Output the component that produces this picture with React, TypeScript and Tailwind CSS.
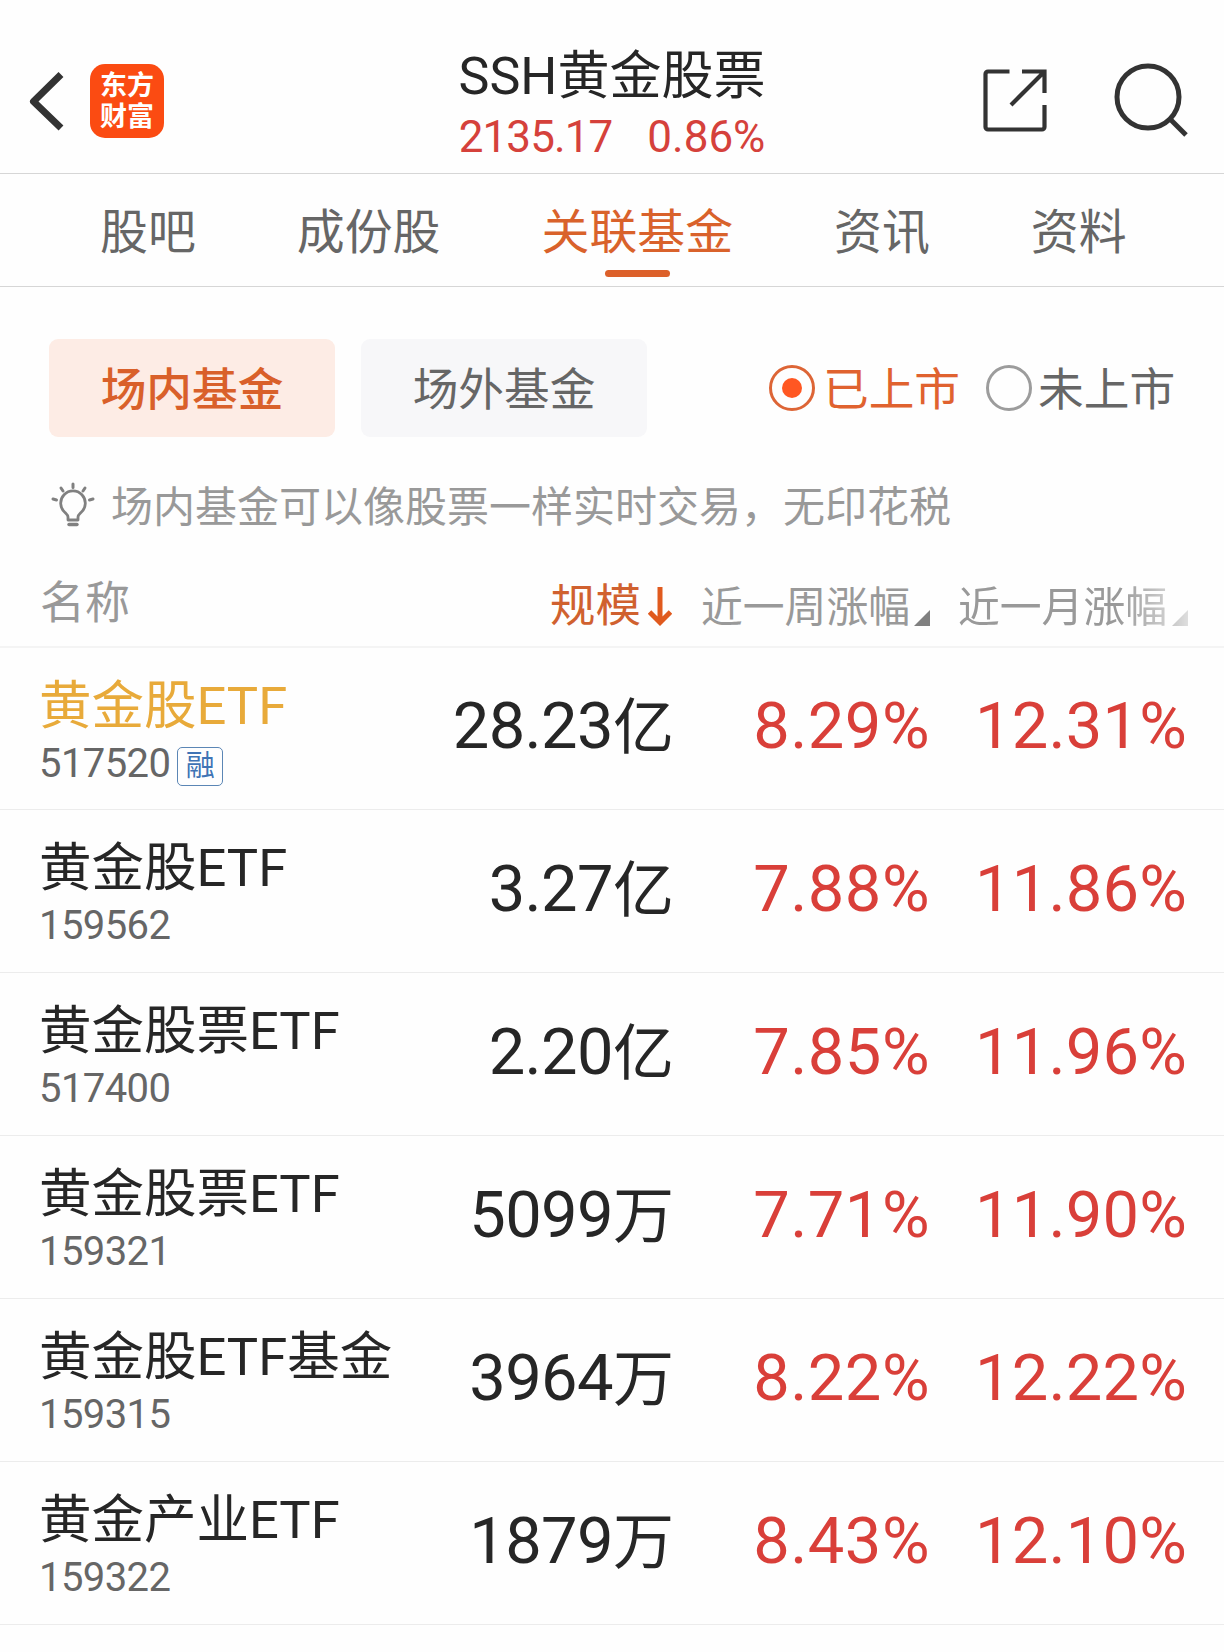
import React from 'react';

const tabs = ["股吧", "成份股", "关联基金", "资讯", "资料"];
const activeTab = "关联基金";

const funds = [
  { name: "黄金股ETF", code: "517520", size: "28.23", unit: "亿", week: "8.29%", month: "12.31%", margin: true, held: true },
  { name: "黄金股ETF", code: "159562", size: "3.27", unit: "亿", week: "7.88%", month: "11.86%" },
  { name: "黄金股票ETF", code: "517400", size: "2.20", unit: "亿", week: "7.85%", month: "11.96%" },
  { name: "黄金股票ETF", code: "159321", size: "5099", unit: "万", week: "7.71%", month: "11.90%" },
  { name: "黄金股ETF基金", code: "159315", size: "3964", unit: "万", week: "8.22%", month: "12.22%" },
  { name: "黄金产业ETF", code: "159322", size: "1879", unit: "万", week: "8.43%", month: "12.10%" },
];

const BackIcon = () => (
  <svg width="36" height="60" viewBox="0 0 36 60" fill="none" stroke="#333" strokeWidth="7" className="shrink-0">
    <path d="M32 3.500L4.500 30.500l27.500 26.500" strokeLinejoin="round" />
  </svg>
);

const ShareIcon = () => (
  <svg width="64" height="64" viewBox="0 0 64 64" fill="none" stroke="#333" strokeWidth="4.200" className="shrink-0">
    <path d="M26.500 3.500H5a2.500 2.500 0 0 0-2.500 2.500v53A2.500 2.500 0 0 0 5 61.500h54a2.500 2.500 0 0 0 2.500-2.500V37" />
    <path d="M39 3.500h22.500V25M61 4L28 37" />
  </svg>
);

const SearchIcon = () => (
  <svg width="76" height="76" viewBox="0 0 76 76" fill="none" stroke="#333" className="shrink-0">
    <circle cx="35" cy="34" r="31" strokeWidth="5" />
    <path d="M56.500 55.500L73 72" strokeWidth="5" />
  </svg>
);

const BulbIcon = () => (
  <svg width="44" height="46" viewBox="0 0 44 46" fill="none" stroke="#808080" strokeWidth="2.800" className="shrink-0 mt-[2px]">
    <path d="M17 38v-3c0-2-1.500-3-3-4.500a12.300 12.300 0 1 1 16 0c-1.500 1.500-3 2.500-3 4.500v3z" strokeLinejoin="round" />
    <path d="M18 42.500h8" strokeWidth="3.400" strokeLinecap="round" />
    <path d="M22 2v3.500M10 6l2 3M34 6l-2 3M2 17l3.500 1M42 17l-3.500 1" strokeWidth="3" strokeLinecap="round" />
  </svg>
);

const DownArrow = () => (
  <svg width="24" height="40" viewBox="0 0 24 40" fill="none" stroke="#e05a1e" strokeWidth="5" className="shrink-0">
    <path d="M12 0v35M1.500 25L12 35.500 22.500 25" />
  </svg>
);

const SortCorner = ({ className }: { className?: string }) => (
  <svg width="16" height="16" viewBox="0 0 16 16" className={className}>
    <path d="M16 0v16H0z" fill="#808080" />
  </svg>
);

const Header = () => (
  <header className="h-[174px] border-b border-[#d6d6d6] relative flex items-start">
    <div className="flex items-center pl-[29px] pt-[64px] gap-[25px]">
      <BackIcon />
      <div className="w-[74px] h-[74px] pt-[2px] rounded-[15px] bg-[#fb4b12] text-white font-bold text-[27px] leading-[31px] flex flex-col items-center justify-center">
        <span>东方</span>
        <span>财富</span>
      </div>
    </div>
    <div className="absolute left-0 right-0 top-[45px] flex flex-col items-center pointer-events-none">
      <h1 className="text-[52px] leading-[64px] text-[#262626]">SSH黄金股票</h1>
      <p className="text-[44px] leading-[56px] text-[#d5413b] flex gap-[35px]">
        <span className="tracking-[-0.900px]">2135.17</span>
        <span>0.86%</span>
      </p>
    </div>
    <div className="ml-auto flex items-start gap-[66px] pr-[35px] pt-[63px]">
      <div className="pt-[5px]">
        <ShareIcon />
      </div>
      <SearchIcon />
    </div>
  </header>
);

const Tabs = () => (
  <nav className="h-[113px] border-b border-[#d6d6d6] flex gap-[101px] pl-[100px] text-[47.900px] leading-[64px] text-[#666] whitespace-nowrap">
    {tabs.map((tab) => (
      <div key={tab} className={`pt-[27px] flex flex-col items-center ${tab === activeTab ? 'text-[#d9622b]' : ''}`}>
        {tab}
        {tab === activeTab && <span className="mt-[5px] w-[65px] h-[7px] rounded-full bg-[#dc602a]" />}
      </div>
    ))}
  </nav>
);

const Filters = () => (
  <div className="flex items-center mt-[52px] pl-[49px] h-[98px] text-[45.700px] whitespace-nowrap">
    <button className="w-[286px] h-[98px] pt-[7px] rounded-[9px] bg-[#fdece5] text-[#d9602a] font-medium">场内基金</button>
    <button className="ml-[26px] w-[286px] h-[98px] pt-[7px] rounded-[9px] bg-[#f7f7f9] text-[#666]">场外基金</button>
    <label className="ml-[122px] flex items-center gap-[8px] text-[#e0622f]">
      <span className="w-[46px] h-[46px] rounded-full border-3 border-[#dd6536] flex items-center justify-center">
        <span className="w-5 h-5 rounded-full bg-[#ff5722]" />
      </span>
      <span className="pt-[7px]">已上市</span>
    </label>
    <label className="ml-[26px] flex items-center gap-[6px] text-[#666]">
      <span className="w-[46px] h-[46px] rounded-full border-3 border-[#9c9c9c]" />
      <span className="pt-[7px]">未上市</span>
    </label>
  </div>
);

const TableHead = () => (
  <div className="flex items-start mt-[35px] h-[77px] border-b-2 border-[#f4f4f4] text-[#999] whitespace-nowrap">
    <div className="w-[509px] pl-[40px] pt-[1px] text-[45px] leading-[64px]">名称</div>
    <div className="w-[192px] pl-[41px] pt-[4px] flex items-center gap-[7px] text-[45.500px] leading-[64px] text-[#d0612f]">
      规模
      <DownArrow />
    </div>
    <div className="w-[257px] pt-[5px] flex items-end text-[41.800px] leading-[64px]">
      近一周涨幅
      <SortCorner className="ml-[4px] mb-[14px]" />
    </div>
    <div className="pt-[5px] flex items-end text-[41.800px] leading-[64px] mask-r-from-70% mask-r-to-110%">
      近一月涨幅
      <SortCorner className="ml-[5px] mb-[14px]" />
    </div>
  </div>
);

const App = () => {
  return (
    <div className="w-[1224px] h-[1652px] bg-[#fefefe] overflow-hidden font-[Roboto,'Noto_Sans_CJK_SC',sans-serif]">
      <Header />
      <Tabs />
      <Filters />
      <div className="flex items-center h-[64px] mt-[35px] pl-[51px] gap-[16px] text-[42px] text-[#999] whitespace-nowrap">
        <BulbIcon />
        <span className="pt-[6px]">场内基金可以像股票一样实时交易，无印花税</span>
      </div>
      <TableHead />
      {funds.map((fund, index) => (
        <div
          key={fund.code}
          className={`border-b border-[#ececec] flex pl-[39px] whitespace-nowrap ${index === 0 ? 'h-[162px]' : 'h-[163px]'}`}
        >
          <div className="w-[390px] pt-[26px]">
            <div className={`text-[52.500px] leading-[64px] ${fund.held ? 'text-[#e8aa3a]' : 'text-[#262626]'}`}>{fund.name}</div>
            <div className="flex items-center h-[52px] text-[40px] tracking-[-0.600px] text-[#666]">
              {fund.code}
              {fund.margin && (
                <span className="ml-[7px] mt-[4px] w-[46px] h-[39px] rounded-[5px] border border-[#5b86b5] text-[#3f74b5] text-[29px] leading-[36px] tracking-normal text-center">
                  融
                </span>
              )}
            </div>
          </div>
          <div className="w-[245px] pb-[3px] flex items-center justify-end text-[65px] tracking-[-0.600px] text-[#262626]">
            {fund.size}
            <span className="pt-[4px] text-[61px] tracking-normal">{fund.unit}</span>
          </div>
          <div className="w-[256px] pb-[3px] flex items-center justify-end text-[65px] tracking-[0.500px] text-[#d93f39]">{fund.week}</div>
          <div className="w-[257px] pb-[3px] flex items-center justify-end text-[65px] tracking-[0.200px] text-[#d93f39]">{fund.month}</div>
        </div>
      ))}
    </div>
  );
};

export default App;
